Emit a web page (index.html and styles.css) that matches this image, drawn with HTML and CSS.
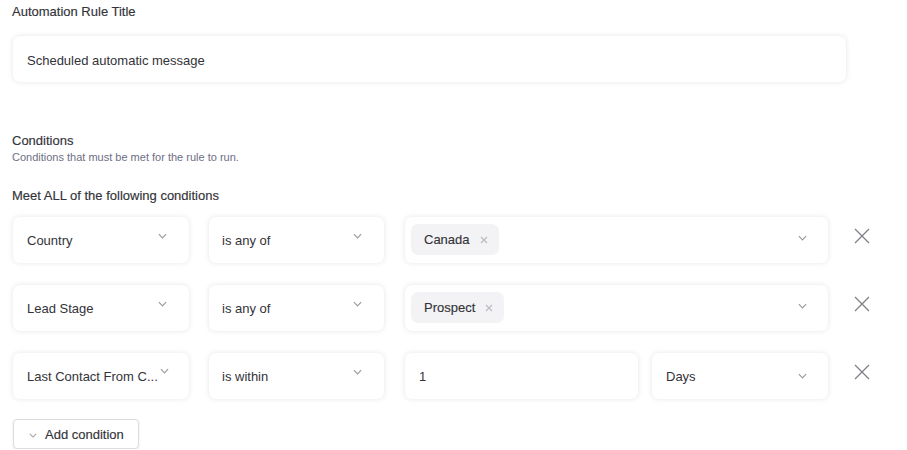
FILE: index.html
```html
<!DOCTYPE html>
<html lang="en">
<head>
    <meta charset="UTF-8">
    <meta name="viewport" content="width=device-width, initial-scale=1.0">
    <title>Automation Rule</title>
    <link rel="stylesheet" href="styles.css">
</head>
<body>
    <div class="page">
        <!-- Title -->
        <div class="field-label">Automation Rule Title</div>
        <div class="title-input">Scheduled automatic message</div>

        <!-- Conditions -->
        <div class="section">
            <div class="section-title">Conditions</div>
            <div class="section-sub">Conditions that must be met for the rule to run.</div>
        </div>
        <div class="meet">Meet ALL of the following conditions</div>

        <div class="rows">
            <div class="row">
                <div class="box box-field">
                    <span class="box-text">Country</span>
                    <svg class="chev" viewBox="0 0 10 6"><path d="M1 1l4 4 4-4"/></svg>
                </div>
                <div class="box box-op">
                    <span class="box-text">is any of</span>
                    <svg class="chev" viewBox="0 0 10 6"><path d="M1 1l4 4 4-4"/></svg>
                </div>
                <div class="box box-value">
                    <span class="tag">Canada <svg class="tag-x" viewBox="0 0 8 8"><path d="M1 1l6 6M7 1l-6 6"/></svg></span>
                    <svg class="chev chev-value" viewBox="0 0 10 6"><path d="M1 1l4 4 4-4"/></svg>
                </div>
                <svg class="remove" viewBox="0 0 16 16"><path d="M1 1l14 14M15 1L1 15"/></svg>
            </div>

            <div class="row">
                <div class="box box-field">
                    <span class="box-text">Lead Stage</span>
                    <svg class="chev" viewBox="0 0 10 6"><path d="M1 1l4 4 4-4"/></svg>
                </div>
                <div class="box box-op">
                    <span class="box-text">is any of</span>
                    <svg class="chev" viewBox="0 0 10 6"><path d="M1 1l4 4 4-4"/></svg>
                </div>
                <div class="box box-value">
                    <span class="tag">Prospect <svg class="tag-x" viewBox="0 0 8 8"><path d="M1 1l6 6M7 1l-6 6"/></svg></span>
                    <svg class="chev chev-value" viewBox="0 0 10 6"><path d="M1 1l4 4 4-4"/></svg>
                </div>
                <svg class="remove" viewBox="0 0 16 16"><path d="M1 1l14 14M15 1L1 15"/></svg>
            </div>

            <div class="row">
                <div class="box box-field">
                    <span class="box-text">Last Contact From C...</span>
                    <svg class="chev chev-near" viewBox="0 0 10 6"><path d="M1 1l4 4 4-4"/></svg>
                </div>
                <div class="box box-op">
                    <span class="box-text">is within</span>
                    <svg class="chev" viewBox="0 0 10 6"><path d="M1 1l4 4 4-4"/></svg>
                </div>
                <div class="split">
                    <div class="box box-num">
                        <span class="box-text">1</span>
                    </div>
                    <div class="box box-unit">
                        <span class="box-text">Days</span>
                        <svg class="chev chev-mid" viewBox="0 0 10 6"><path d="M1 1l4 4 4-4"/></svg>
                    </div>
                </div>
                <svg class="remove" viewBox="0 0 16 16"><path d="M1 1l14 14M15 1L1 15"/></svg>
            </div>
        </div>

        <button class="add-btn">
            <svg class="add-chev" viewBox="0 0 10 6"><path d="M1 1l4 4 4-4"/></svg>
            Add condition
        </button>
    </div>
</body>
</html>
```

FILE: styles.css
```css
body, html {
    margin: 0;
    padding: 0;
    background: #ffffff;
    font-family: "Liberation Sans", Arial, sans-serif;
    color: #333338;
    overflow: hidden;
}
.page {
    padding: 4px 0 0 12px;
}
.field-label {
    font-size: 13px;
    font-weight: 500;
    line-height: 16px;
    color: #333338;
    -webkit-text-stroke: 0.15px #333338;
}
.title-input {
    margin-top: 15px;
    width: 835px;
    height: 48px;
    border-radius: 8px;
    box-shadow: 0 0 5px rgba(0, 0, 0, 0.07);
    border: 1px solid #f4f4f4;
    box-sizing: border-box;
    display: flex;
    align-items: center;
    padding: 2px 0 0 14px;
    font-size: 13px;
    color: #333338;
}
.section {
    margin-top: 50px;
}
.section-title {
    font-size: 13px;
    line-height: 16px;
    -webkit-text-stroke: 0.15px #333338;
}
.section-sub {
    margin-top: 1px;
    font-size: 11px;
    line-height: 14px;
    color: #6e6e85;
}
.meet {
    margin-top: 24px;
    font-size: 13px;
    line-height: 16px;
    -webkit-text-stroke: 0.15px #333338;
}
.rows {
    margin-top: 12px;
    display: flex;
    flex-direction: column;
    gap: 20px;
}
.row {
    display: flex;
    align-items: center;
}
.box {
    flex-shrink: 0;
    height: 48px;
    box-sizing: border-box;
    border-radius: 8px;
    border: 1px solid #f4f4f4;
    box-shadow: 0 0 5px rgba(0, 0, 0, 0.07);
    display: flex;
    align-items: center;
    position: relative;
    font-size: 13px;
    color: #333338;
}
.box-text {
    padding-left: 14px;
    white-space: nowrap;
}
.box-field {
    width: 178px;
}
.box-op {
    width: 177px;
    margin-left: 18px;
}
.box-op .box-text {
    padding-left: 13px;
}
.box-value {
    width: 425px;
    margin-left: 19px;
    padding-left: 6px;
}
.split {
    flex-shrink: 0;
    display: flex;
    width: 425px;
    margin-left: 19px;
    gap: 12px;
}
.box-num {
    width: 235px;
}
.box-unit {
    flex: 1;
}
.chev {
    position: absolute;
    right: 22px;
    top: 16px;
    width: 9px;
    height: 6px;
    fill: none;
    stroke: #9a9aa2;
    stroke-width: 1.3;
}
.chev-value {
    top: 18px;
    right: 21px;
}
.chev-mid {
    top: 20px;
    right: 21px;
}
.chev-near {
    right: 20px;
    top: 15px;
}
.tag {
    display: flex;
    align-items: center;
    gap: 10px;
    height: 31px;
    margin-top: -1px;
    padding: 0 11px 0 13px;
    border-radius: 7px;
    background: #f3f3f5;
    font-weight: 500;
    -webkit-text-stroke: 0.15px #333338;
}
.tag-x {
    width: 8px;
    height: 8px;
    fill: none;
    stroke: #bbbbc2;
    stroke-width: 1.2;
}
.remove {
    flex-shrink: 0;
    width: 16px;
    height: 16px;
    margin: 0 0 8px 25px;
    fill: none;
    stroke: #808088;
    stroke-width: 1.3;
}
.add-btn {
    margin-top: 19px;
    margin-left: 1px;
    height: 30px;
    padding: 0 14px 0 15px;
    display: flex;
    align-items: center;
    gap: 8px;
    background: #ffffff;
    border: 1px solid #dcdcdf;
    border-radius: 4px;
    box-shadow: 0 1px 3px rgba(0, 0, 0, 0.08);
    font-family: "Liberation Sans", Arial, sans-serif;
    font-size: 13px;
    color: #333338;
    -webkit-text-stroke: 0.15px #333338;
}
.add-chev {
    width: 8px;
    height: 5px;
    margin-top: 3px;
    fill: none;
    stroke: #a0a0a8;
    stroke-width: 1.3;
}
```
